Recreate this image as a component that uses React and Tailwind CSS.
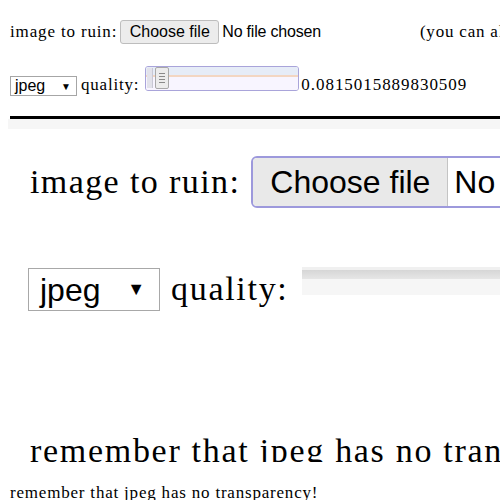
const serif = "font-['Liberation_Serif','Times_New_Roman',serif]";
const sans = "font-['Liberation_Sans',Arial,sans-serif]";

const Slider = () => (
    <div className="relative w-[154px] h-[25px] rounded-[3px] border-[1.5px] border-[#a9a4da] bg-[#fbf9ff] overflow-hidden shrink-0">
        <div className="h-[8px] bg-[#e6ecf7]" />
        <div className="h-[2px] bg-[#f3d6c2]" />
        <div className="h-[13px] bg-[#f8f5ff]" />
        <div className="absolute left-[1px] top-[1px] w-[6px] h-[20px] bg-[#e2e2ea] border-r border-[#c8c8d4]" />
        <div className="absolute left-[9px] top-[0px] w-[14px] h-[22px] bg-[#ececec] border border-[#a8a8a8] rounded-[2px] flex flex-col items-center justify-center gap-[2px]">
            <div className="w-[6px] h-[1px] bg-[#8a8a8a]" />
            <div className="w-[6px] h-[1px] bg-[#8a8a8a]" />
            <div className="w-[6px] h-[1px] bg-[#8a8a8a]" />
            <div className="w-[6px] h-[1px] bg-[#8a8a8a]" />
        </div>
    </div>
);

const App = () => {
    return (
        <div className={`w-[500px] h-[500px] overflow-hidden bg-white text-black ${serif}`}>
            {/* row 1 */}
            <div className="flex items-center h-[24px] mt-[20px] pl-[10px] whitespace-nowrap">
                <span className="shrink-0 text-[17px] leading-[20px] tracking-[0.85px]">image to ruin:</span>
                <div className={`shrink-0 ml-[3px] w-[99px] h-[24px] flex items-center justify-center border border-[#bdbdbd] bg-[#ececec] rounded-[3px] text-[16px] ${sans}`}>
                    Choose file
                </div>
                <span className={`shrink-0 ml-[3px] text-[16px] tracking-[-0.2px] ${sans}`}>No file chosen</span>
                <span className="shrink-0 ml-[99px] text-[17px] tracking-[0.8px]">(you can also paste an image)</span>
            </div>

            {/* row 2 */}
            <div className="flex items-start h-[30px] mt-[22px] pl-[10px] whitespace-nowrap">
                <div className={`shrink-0 mt-[10px] w-[67px] h-[20px] flex items-center justify-between pl-[4px] pr-[5px] border border-[#a6a6a6] bg-white text-[16px] ${sans}`}>
                    <span>jpeg</span>
                    <span className="text-[10px]">▼</span>
                </div>
                <span className="shrink-0 ml-[4px] mt-[9px] text-[17px] leading-[20px] tracking-[0.8px]">quality:</span>
                <div className="shrink-0 ml-[6px]">
                    <Slider />
                </div>
                <span className="shrink-0 ml-[2px] mt-[9px] text-[17px] leading-[20px] tracking-[0.95px]">0.0815015889830509</span>
            </div>

            <div className="ml-[10px] mt-[20px] h-[3px] bg-black" />

            {/* ruined screenshot, drawn at twice the size */}
            <div className="h-[343px] overflow-hidden whitespace-nowrap">
                <div className="h-[10px] ml-[8px] bg-[#f6f6f6]" />
                <div className="flex items-center h-[52px] mt-[27px] pl-[30px]">
                    <span className="shrink-0 text-[34px] leading-[40px] tracking-[1.4px]">image to ruin:</span>
                    <div className={`shrink-0 ml-[11px] flex h-[52px] border-2 border-[#9d99dc] rounded-[6px] overflow-hidden text-[32px] ${sans}`}>
                        <div className="shrink-0 w-[195px] flex items-center justify-center bg-[#e9e9e9] border-r border-[#c4c4c4]">
                            Choose file
                        </div>
                        <div className="shrink-0 flex items-center pl-[6px] pr-[10px] bg-white">No file chosen</div>
                    </div>
                </div>
                <div className="flex items-start h-[46px] mt-[59px] pl-[28px]">
                    <div className={`shrink-0 mt-[1px] w-[132px] h-[43px] flex items-center justify-between pl-[11px] pr-[14px] border-[1.5px] border-[#a8a8a8] bg-white text-[32px] ${sans}`}>
                        <span>jpeg</span>
                        <span className="text-[18px]">▼</span>
                    </div>
                    <span className="shrink-0 ml-[11px] mt-[2px] text-[34px] leading-[40px] tracking-[1.7px]">quality:</span>
                    <div className="ml-[14px] flex-1">
                        <div className="h-[3px] bg-[#f0f0f0]" />
                        <div className="h-[9px] bg-gradient-to-b from-[#d6d6d6] to-[#e6e6e6]" />
                        <div className="h-[16px] bg-[#f6f6f6]" />
                    </div>
                </div>
                <div className="mt-[118px] pl-[30px] text-[34px] leading-[40px] tracking-[1.7px]">
                    remember that jpeg has no transparency!
                </div>
            </div>

            <div className="mt-[21px] pl-[10px] text-[17px] leading-[20px] tracking-[0.8px] whitespace-nowrap">
                remember that jpeg has no transparency!
            </div>
        </div>
    );
};

export default App;
